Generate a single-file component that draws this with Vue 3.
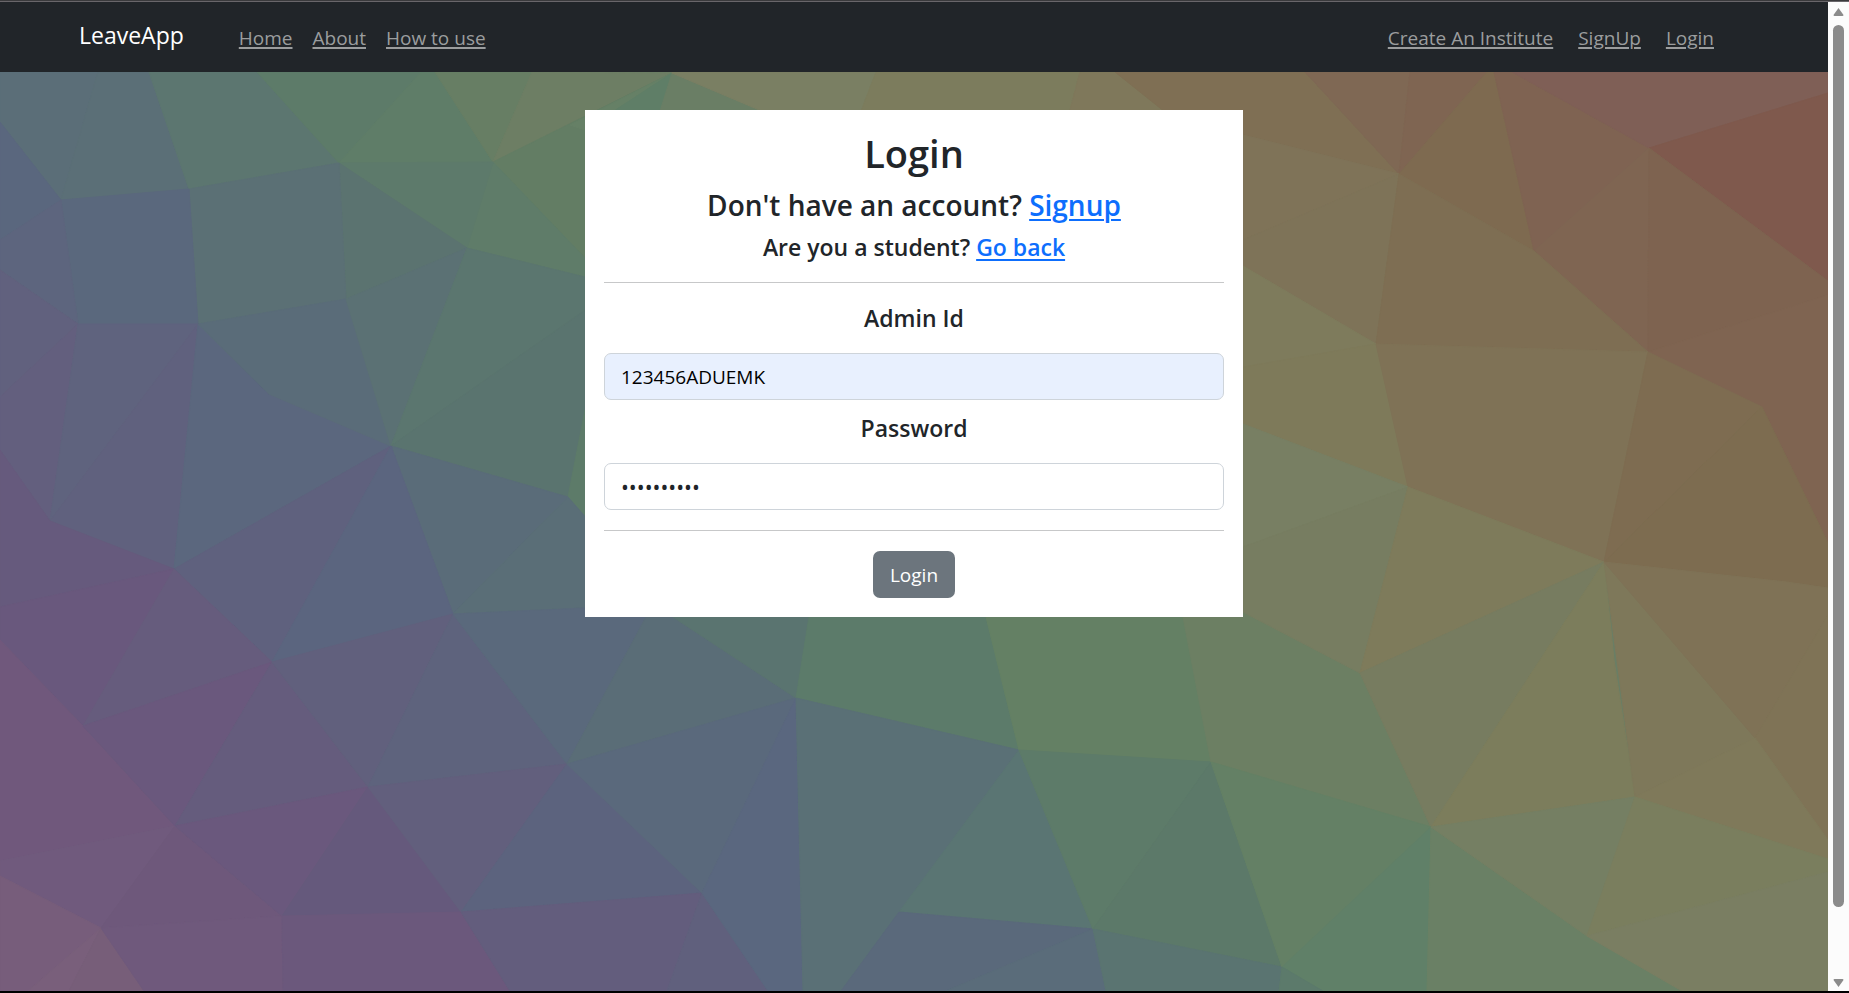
<script setup>
import { ref } from 'vue'

const mainLinks = ['Home', 'About', 'How to use']
const accountLinks = ['Create An Institute', 'SignUp', 'Login']
const adminId = ref('123456ADUEMK')
const password = ref('adminpass1')

// Low-poly backdrop: [fill, polygon points]
const facets = [
  // top left
  ['#5b6e78', '0,72 98,72 61,200 0,122'],
  ['#5b6f77', '98,72 149,72 189,189 61,200'],
  ['#5c7670', '149,72 257,72 339,163 189,189'],
  ['#5d7b69', '257,72 421,72 339,163'],
  ['#5f7d68', '421,72 435,72 493,162 339,163'],
  ['#677e64', '435,72 532,72 493,162'],
  ['#6d7e64', '532,72 672,73 493,162'],
  ['#637d64', '493,162 672,73 661,110 760,470 585,258'],
  ['#5f7c69', '493,162 585,258 585,277 467,248'],
  ['#5d7a6b', '339,163 493,162 467,248'],
  ['#5b7370', '339,163 467,248 346,299'],
  ['#5b7075', '189,189 339,163 346,299 198,324'],
  ['#5a687d', '61,200 189,189 198,324 78,324'],
  ['#5a677e', '0,122 61,200 0,240'],
  ['#5d657e', '0,240 61,200 78,324 0,270'],
  ['#61617e', '0,270 78,324 0,397'],
  // left
  ['#635f7e', '0,397 78,324 50,521 0,450'],
  ['#5f637e', '78,324 198,324 50,521'],
  ['#60617e', '198,324 174,569 50,521'],
  ['#5b677e', '198,324 269,394 391,446 174,569'],
  ['#5a6c79', '198,324 346,299 391,446 269,394'],
  ['#5b7174', '346,299 467,248 391,446'],
  ['#5b766f', '467,248 585,277 585,310 391,446'],
  ['#5a746f', '391,446 700,230 700,400 585,410 568,497'],
  ['#5d7b69', '568,497 585,410 700,400 700,617 620,580'],
  ['#5a6c79', '391,446 568,497 453,614'],
  ['#5a6e77', '568,497 673,617 646,617 585,608 453,614'],
  ['#5f617e', '391,446 174,569 272,662'],
  ['#5b657f', '391,446 453,614 272,662'],
  ['#665a7d', '0,450 50,521 174,569 0,607'],
  ['#69587d', '0,607 174,569 83,726 0,640'],
  ['#665c7d', '174,569 272,662 83,726'],
  // bottom left
  ['#70587c', '0,640 83,726 175,826 0,861'],
  ['#6a587d', '83,726 272,662 175,826'],
  ['#655c7d', '272,662 368,787 175,826'],
  ['#61607d', '272,662 453,614 368,787'],
  ['#5e637d', '453,614 567,764 368,787'],
  ['#5a697c', '453,614 585,608 646,617 567,764'],
  ['#705a7d', '0,861 175,826 101,928 0,876'],
  ['#6e587b', '175,826 282,916 101,928'],
  ['#6a587d', '175,826 368,787 282,916'],
  ['#65597c', '368,787 461,912 282,916'],
  ['#625f7d', '368,787 567,764 461,912'],
  ['#5c637e', '567,764 702,893 461,912'],
  ['#775d7b', '0,876 101,928 28,991 0,991'],
  ['#795f7b', '101,928 69,991 28,991'],
  ['#775e79', '101,928 144,991 69,991'],
  ['#6f597c', '101,928 282,916 283,991 144,991'],
  ['#6b587c', '282,916 461,912 510,991 283,991'],
  ['#635d7d', '461,912 702,893 667,991 510,991'],
  ['#60607d', '702,893 768,991 667,991'],
  // bottom centre
  ['#5a6d77', '646,617 673,617 796,698 567,764'],
  ['#5a7470', '673,617 809,617 796,698'],
  ['#5a697c', '567,764 796,698 702,893'],
  ['#5a677f', '796,698 803,991 768,991 702,893'],
  ['#5c7b6a', '809,617 700,500 900,400 986,617 1019,750 796,698'],
  ['#5a7076', '796,698 1019,750 841,991 803,991'],
  ['#648064', '986,617 960,400 1140,400 1183,617 1211,762 1019,750'],
  ['#5a7573', '1019,750 1093,929 899,912'],
  ['#5a697b', '899,912 1093,929 946,991 841,991'],
  ['#5a6c7a', '1093,929 1106,991 946,991'],
  ['#5d7b69', '1019,750 1211,762 1093,929'],
  ['#5c7969', '1211,762 1282,967 1093,929'],
  ['#5a7471', '1093,929 1282,967 1279,991 1106,991'],
  ['#6c7f63', '1183,617 1140,400 1243,424 1243,612 1360,673 1431,827 1211,762'],
  // upper strip over the card
  ['#668066', '672,73 585,130 570,125'],
  ['#5f7e67', '672,73 585,130 661,140'],
  ['#6a7e65', '672,73 830,140 651,140'],
  ['#7a7f63', '672,73 672,72 876,72 850,140 830,140'],
  ['#7c7c5d', '876,72 1080,72 1062,140 850,140'],
  ['#7f785b', '1080,72 1115,72 1200,140 1062,140'],
  ['#7f6f54', '1115,72 1305,72 1399,174 1243,135 1200,140'],
  // top right
  ['#7f6854', '1305,72 1410,72 1399,174'],
  ['#7f6552', '1410,72 1487,72 1399,174'],
  ['#7e6a50', '1487,72 1494,72 1534,251 1399,174'],
  ['#7f6352', '1494,72 1512,72 1649,148 1534,251'],
  ['#7f5f56', '1512,72 1828,72 1828,93 1649,148'],
  ['#7f594d', '1649,148 1828,93 1828,281'],
  ['#7f6552', '1649,148 1648,352 1534,251'],
  ['#7e6350', '1649,148 1828,281 1828,295 1648,352'],
  ['#7f7358', '1243,135 1399,174 1243,240'],
  ['#7e7358', '1243,240 1399,174 1376,344 1243,266'],
  ['#7e6e53', '1399,174 1534,251 1648,352 1376,344'],
  ['#7e7b5c', '1243,266 1376,344 1254,366 1243,368'],
  ['#7e7a5a', '1243,367 1376,344 1408,487 1243,424'],
  ['#7f7256', '1376,344 1648,352 1604,562 1408,487'],
  ['#7f6451', '1648,352 1828,295 1828,543 1762,407'],
  ['#7e6c51', '1648,352 1762,407 1604,562'],
  ['#7d6c50', '1762,407 1828,543 1828,588 1787,582 1604,562'],
  // right
  ['#787f63', '1243,424 1408,487 1243,547'],
  ['#777d61', '1243,547 1408,487 1360,673 1243,612'],
  ['#7e7b5b', '1408,487 1604,562 1360,673'],
  ['#777c60', '1604,562 1431,827 1360,673'],
  ['#7c7d5c', '1604,562 1614,660 1635,797 1431,827'],
  ['#7e785a', '1604,562 1755,738 1635,797'],
  ['#7f7256', '1604,562 1787,582 1828,588 1828,615 1755,738'],
  ['#7f7356', '1828,615 1828,840 1755,738'],
  ['#7f795a', '1755,738 1828,840 1828,859 1635,797'],
  // bottom right
  ['#648065', '1211,762 1431,827 1282,967'],
  ['#608068', '1431,827 1427,991 1323,991 1282,967'],
  ['#5c7a6b', '1282,967 1323,991 1279,991'],
  ['#6a8065', '1431,827 1587,936 1682,991 1427,991'],
  ['#757f63', '1431,827 1635,797 1587,936'],
  ['#7a7e5e', '1635,797 1828,859 1828,872 1587,936'],
  ['#7a7e62', '1587,936 1828,872 1828,991 1682,991']
]
</script>

<template>
  <div class="window">
    <div class="top-edge"></div>
    <div class="viewport">
      <div class="page">
        <nav class="navbar">
          <a class="brand" href="#">LeaveApp</a>
          <div class="links">
            <a v-for="link in mainLinks" :key="link" href="#">{{ link }}</a>
          </div>
          <div class="links account">
            <a v-for="link in accountLinks" :key="link" href="#">{{ link }}</a>
          </div>
        </nav>

        <main class="hero">
          <svg class="backdrop" viewBox="0 72 1828 919" preserveAspectRatio="none" aria-hidden="true">
            <polygon
              v-for="(facet, i) in facets"
              :key="i"
              :points="facet[1]"
              :fill="facet[0]"
              :stroke="facet[0]"
            />
          </svg>

          <form class="card" @submit.prevent>
            <h1>Login</h1>
            <h2>Don't have an account? <a href="#">Signup</a></h2>
            <h3>Are you a student? <a href="#">Go back</a></h3>
            <hr />
            <label for="admin-id">Admin Id</label>
            <input id="admin-id" v-model="adminId" class="filled" type="text" />
            <label for="password">Password</label>
            <input id="password" v-model="password" type="password" />
            <hr />
            <button type="submit">Login</button>
          </form>
        </main>
      </div>

      <div class="scrollbar" aria-hidden="true">
        <svg viewBox="0 0 11 10" width="11" height="10"><path d="M5.500 1 10.500 8Q10.500 9 9.500 9H1.500Q.5 9 .5 8Z" /></svg>
        <div class="track"><div class="thumb"></div></div>
        <svg viewBox="0 0 11 10" width="11" height="10"><path d="M5.500 9 .5 2Q.5 1 1.500 1H9.500Q10.500 1 10.500 2Z" /></svg>
      </div>
    </div>
  </div>
</template>

<style>
body {
  margin: 0;
}
</style>

<style scoped>
* {
  box-sizing: border-box;
}

.window {
  display: flex;
  flex-direction: column;
  min-height: 100vh;
  border-bottom: 2px solid #000;
  background: #212529;
  color: #212529;
  font-family: "Open Sans", "Noto Sans", sans-serif;
  font-size: 19px;
}

.top-edge {
  height: 2px;
  background: #3a3a3c;
  border-bottom: 1px solid #69666a;
}

.viewport {
  display: flex;
  flex: 1;
}

.page {
  display: flex;
  flex: 1;
  flex-direction: column;
  min-width: 0;
}

.navbar {
  display: flex;
  align-items: center;
  height: 70px;
  padding: 2px 114px 0 79px;
  background: #212529;
}

.brand {
  margin: 0 55px 6px 0;
  color: #fff;
  font-size: 23px;
  text-decoration: none;
}

.links {
  display: flex;
  gap: 20px;
}

.links a {
  color: #9b9d9e;
  text-underline-offset: 2px;
  text-decoration-thickness: 2px;
}

.account {
  gap: 25px;
  margin-left: auto;
}

.hero {
  position: relative;
  flex: 1;
  padding: 38px 0;
}

.backdrop {
  position: absolute;
  inset: 0;
  width: 100%;
  height: 100%;
  background: #6a7e65;
}

.card {
  position: relative;
  display: flex;
  flex-direction: column;
  align-items: center;
  width: 36%;
  margin: 0 auto;
  padding: 19px;
  background: #fff;
}

h1,
h2,
h3,
label {
  margin: 0;
  font-weight: 600;
}

h1 {
  margin-bottom: 10px;
  font-size: 38px;
  line-height: 48px;
}

h2 {
  margin-bottom: 10px;
  font-size: 28px;
  line-height: 36px;
}

h3,
label {
  font-size: 23px;
  line-height: 30px;
}

h3 {
  line-height: 29px;
}

h2 a,
h3 a {
  color: #0d6efd;
  text-underline-offset: 3px;
  text-decoration-thickness: 2px;
}

hr {
  width: 100%;
  height: 1px;
  margin: 20px 0;
  border: 0;
  background: #c7c8c9;
}

input {
  width: 100%;
  height: 47px;
  margin: 20px 0 13px;
  padding: 0 16px;
  border: 1px solid #ced4da;
  border-radius: 7px;
  background: #fff;
  color: #212529;
  font: inherit;
}

input.filled {
  background: #e8f0fe;
  color: #000;
}

input[type="password"] {
  margin-bottom: 0;
  font-size: 21px;
}

button {
  height: 47px;
  padding: 0 17px;
  border: 0;
  border-radius: 7px;
  background: #6c757d;
  color: #fff;
  font: inherit;
}

.scrollbar {
  display: flex;
  flex-direction: column;
  align-items: center;
  gap: 8px;
  width: 21px;
  padding: 5px 0 3px;
  background: #fcfcfc;
}

.scrollbar path {
  fill: #8b8b8b;
}

.track {
  display: flex;
  flex: 1;
  flex-direction: column;
  width: 11px;
}

.thumb {
  flex: 14;
  border-radius: 6px;
  background: #8b8b8b;
}

.track::after {
  flex: 1;
  content: "";
}
</style>
